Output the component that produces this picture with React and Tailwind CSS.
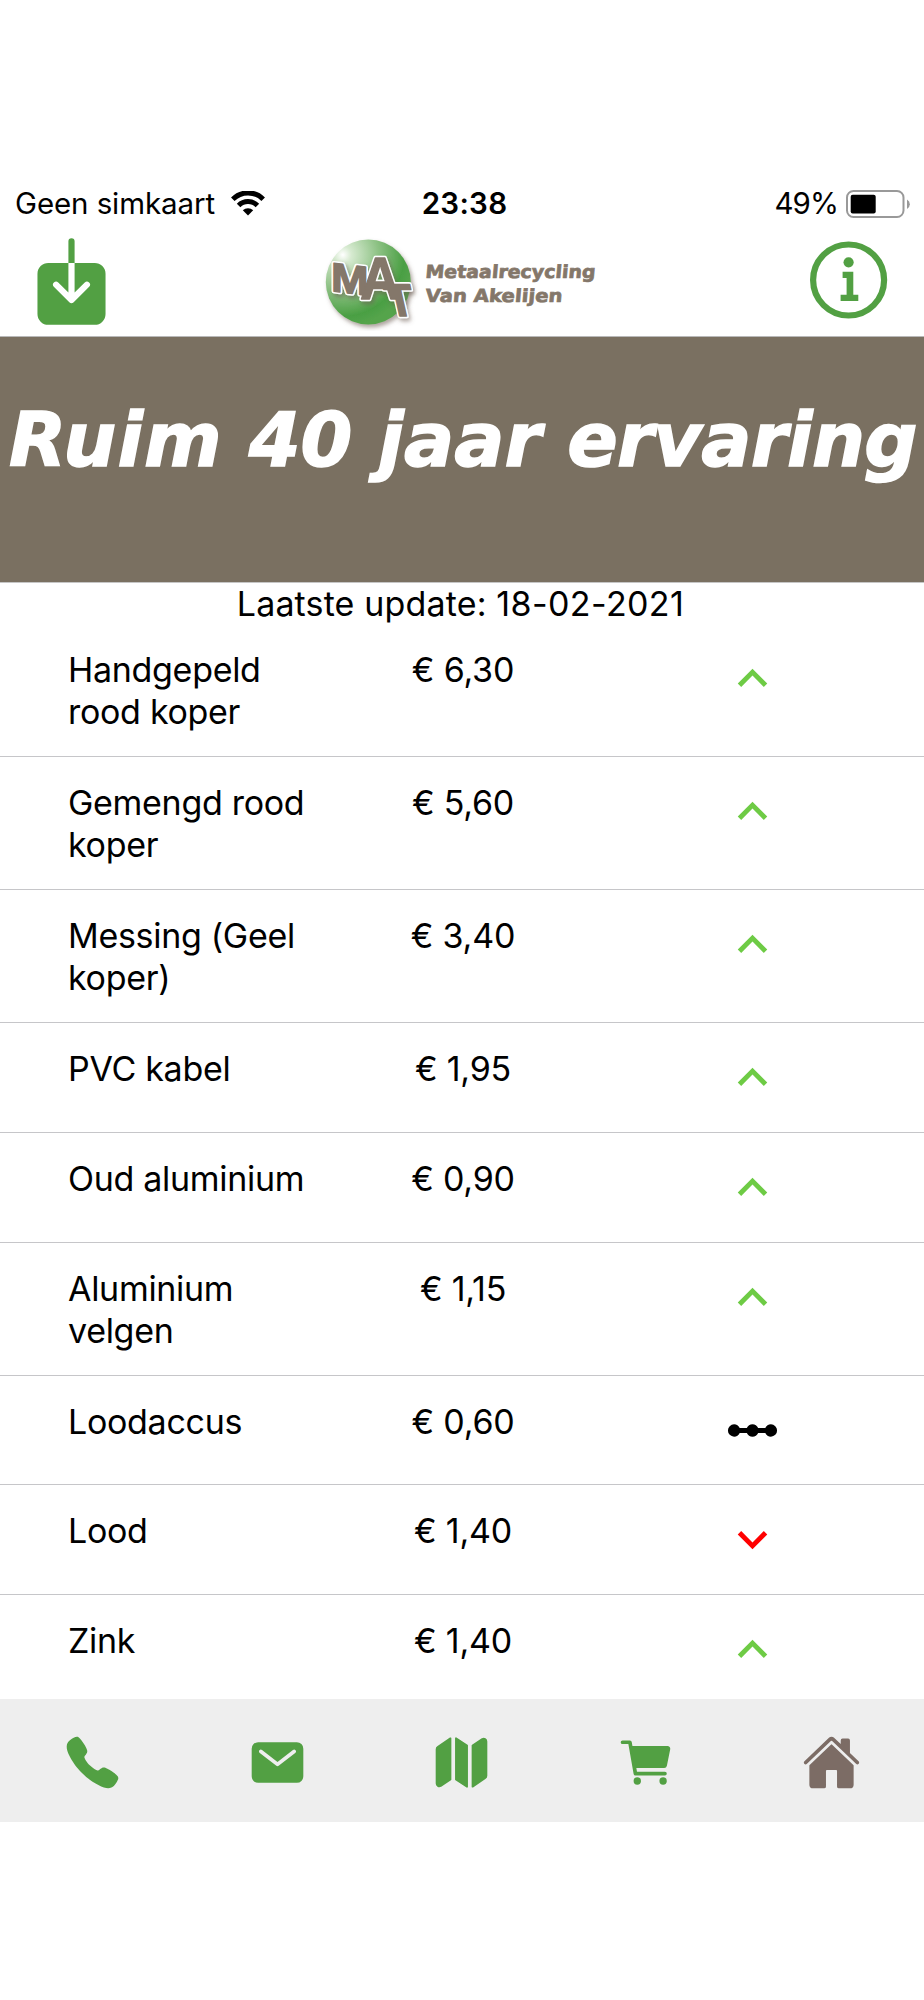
import { IoCall, IoCart, IoDownload, IoHome, IoMail, IoMap } from "react-icons/io5";
import { MdExpandLess, MdExpandMore, MdLinearScale } from "react-icons/md";

const prices = [
    { name: "Handgepeld rood koper", price: "€ 6,30", trend: "up", tall: true },
    { name: "Gemengd rood koper", price: "€ 5,60", trend: "up", tall: true },
    { name: "Messing (Geel koper)", price: "€ 3,40", trend: "up", tall: true },
    { name: "PVC kabel", price: "€ 1,95", trend: "up" },
    { name: "Oud aluminium", price: "€ 0,90", trend: "up" },
    { name: "Aluminium velgen", price: "€ 1,15", trend: "up", tall: true },
    { name: "Loodaccus", price: "€ 0,60", trend: "same" },
    { name: "Lood", price: "€ 1,40", trend: "down" },
    { name: "Zink", price: "€ 1,40", trend: "up" },
];

const tabs = [
    { id: "call", Icon: IoCall },
    { id: "mail", Icon: IoMail },
    { id: "map", Icon: IoMap },
    { id: "cart", Icon: IoCart },
    { id: "home", Icon: IoHome, active: true },
];

function StatusBar() {
    return (
        <div className="flex h-[54px] items-center pl-[15px] pr-3 text-[29.5px] leading-none">
            <div className="flex flex-1 items-center">
                <span className="tracking-[-0.1px]">Geen simkaart</span>
                <svg className="ml-[15px] h-[26px] w-9" viewBox="0 0 36 26" fill="none" stroke="#000" strokeWidth="5">
                    <path d="M2.8 8.2a21.5 21.5 0 0 1 30.4 0" />
                    <path d="M8.6 14.4a13.3 13.3 0 0 1 18.8 0" />
                    <path d="M18 24.6l-5.2-5.3a7.4 7.4 0 0 1 10.4 0z" fill="#000" stroke="none" />
                </svg>
            </div>
            <span className="pl-0.5 font-semibold tracking-[0.3px]">23:38</span>
            <div className="flex flex-1 items-center justify-end">
                <span className="tracking-[-0.9px]">49%</span>
                <svg className="ml-2 h-7 w-[66px]" viewBox="0 0 66 28">
                    <rect x="1" y="1" width="56.5" height="26" rx="6.5" fill="none" stroke="#999" strokeWidth="2" />
                    <rect x="4.7" y="4.8" width="25" height="18.6" rx="2" />
                    <path d="M61 9.5a5.5 5.5 0 0 1 0 9.6z" fill="#999" />
                </svg>
            </div>
        </div>
    );
}

function Monogram({ stroke, strokeWidth }) {
    return (
        <g
            className="font-['Liberation_Sans'] font-bold"
            fill="#84776a"
            stroke={stroke}
            strokeWidth={strokeWidth}
            strokeLinejoin="round"
        >
            <text transform="translate(15 60) skewY(7) scale(1.1 1)" fontSize="41">M</text>
            <text transform="translate(44 68) scale(0.93 1)" fontSize="60">A</text>
            <text transform="matrix(1 0 0.22 1 73 85)" fontSize="46">T</text>
        </g>
    );
}

function Logo() {
    return (
        <svg className="-mt-0.5 ml-px h-[100px] w-[290px]" viewBox="0 0 290 100">
            <defs>
                <radialGradient id="ball" cx="0.2" cy="0.18" r="0.85">
                    <stop offset="0" stopColor="#ffffff" />
                    <stop offset="0.12" stopColor="#d6ead0" />
                    <stop offset="0.5" stopColor="#8cc183" />
                    <stop offset="0.85" stopColor="#4a9f43" />
                    <stop offset="1" stopColor="#55a44c" />
                </radialGradient>
                <filter id="shadow" x="-20%" y="-20%" width="150%" height="150%">
                    <feDropShadow dx="2" dy="3" stdDeviation="2" floodColor="#6b5a50" floodOpacity="0.55" />
                </filter>
            </defs>
            <circle cx="52.3" cy="51" r="42.5" fill="url(#ball)" filter="url(#shadow)" />
            <g filter="url(#shadow)" aria-hidden="true">
                <Monogram stroke="#fff" strokeWidth="4.5" />
            </g>
            <Monogram stroke="#84776a" strokeWidth="1.4" />
            <g className="font-['DejaVu_Sans'] font-bold" fill="#84776a" stroke="#84776a" strokeWidth="0.7" fontSize="18">
                <text transform="translate(109 46.5) skewX(-5)" textLength="170" lengthAdjust="spacingAndGlyphs">
                    Metaalrecycling
                </text>
                <text transform="translate(109 71) skewX(-5)" textLength="137" lengthAdjust="spacingAndGlyphs">
                    Van Akelijen
                </text>
            </g>
        </svg>
    );
}

function InfoIcon() {
    return (
        <svg className="size-[99px]" viewBox="0 0 99 99" fill="#52a043">
            <circle cx="47.6" cy="48" r="35.5" fill="none" stroke="#52a043" strokeWidth="6.2" />
            <circle cx="47.6" cy="30.3" r="5.1" />
            <path d="M41.6 39.7h10.7v23h5v6.2H39.6v-6.2h6V46h-4z" />
        </svg>
    );
}

function Header() {
    return (
        <header className="flex h-[105.5px] items-center justify-between border-b border-[#b9b9b9] pb-[3px] pl-[21.5px] pr-[24px]">
            <IoDownload size={99} className="text-[#52a043]" />
            <Logo />
            <InfoIcon />
        </header>
    );
}

function Trend({ trend }) {
    if (trend === "up") return <MdExpandLess size={59} className="text-[#6ecb45]" />;
    if (trend === "down") return <MdExpandMore size={59} className="text-[#ff0000]" />;
    return <MdLinearScale size={59} className="text-black" />;
}

function PriceRow({ item }) {
    return (
        <li className={`flex border-b border-[#c6c6c9] pl-[68px] ${item.tall ? "h-[133.05px]" : "h-[109.8px]"}`}>
            <p className="w-[253px] pr-2 pt-[25px] tracking-[-0.3px]">{item.name}</p>
            <p className="w-[284px] pt-[25px] text-center tracking-[-0.2px]">{item.price}</p>
            <div className="flex flex-1 pl-[118px] pt-[25px]">
                <Trend trend={item.trend} />
            </div>
        </li>
    );
}

export default function App() {
    return (
        <div className="flex h-[2000px] w-[924px] flex-col bg-white pt-[177px] font-['Inter',sans-serif] text-black">
            <StatusBar />
            <Header />
            <div className="flex h-[246px] justify-center border-b border-[#c6c6c6] bg-[#7a7061]">
                <h1 className="whitespace-nowrap pl-0.5 pt-[60px] font-['DejaVu_Sans'] text-[74.5px] font-bold italic leading-[88px] text-white [-webkit-text-stroke:1.5px_white]">
                    <span className="tracking-[1.1px]">Ruim</span> 40 jaar{" "}
                    <span className="tracking-[-0.6px]">ervaring</span>
                </h1>
            </div>
            <p className="h-[41.3px] pr-[3px] text-center text-[34px] leading-[41.5px] tracking-[0.15px]">
                Laatste update: <span className="tracking-[0.4px]">18-02-2021</span>
            </p>
            <ul className="h-[1075.2px] overflow-hidden text-[34px] leading-[42px]">
                {prices.map((item) => (
                    <PriceRow key={item.name} item={item} />
                ))}
            </ul>
            <nav className="flex h-[123px] items-center bg-[#eeeeee] pt-1">
                {tabs.map(({ id, Icon, active }) => (
                    <button key={id} className="flex flex-1 justify-center">
                        <Icon size={59} className={active ? "text-[#7c6c65]" : "text-[#52a043]"} />
                    </button>
                ))}
            </nav>
        </div>
    );
}
